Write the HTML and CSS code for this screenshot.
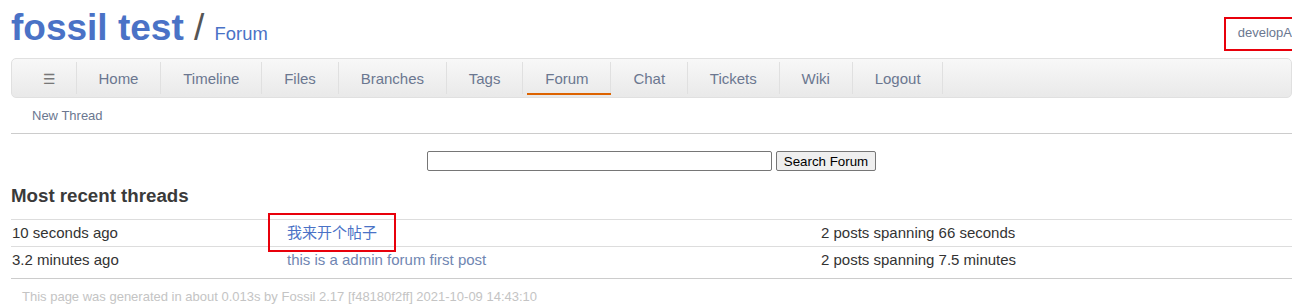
FILE: index.html
```html
<!DOCTYPE html>
<html lang="en">
<head>
    <meta charset="UTF-8">
    <title>fossil test: Forum</title>
    <link rel="stylesheet" href="styles.css">
</head>
<body>

    <div class="header">
        <h1 class="title">
            <span class="project">fossil test</span> <span class="slash">/</span> <span class="page-name">Forum</span>
        </h1>
        <div class="login"><a href="#">developA</a></div>
    </div>

    <!-- main menu -->
    <div class="mainmenu">
        <a href="#" class="menu-toggle">&#9776;</a>
        <a href="#">Home</a>
        <a href="#">Timeline</a>
        <a href="#">Files</a>
        <a href="#">Branches</a>
        <a href="#">Tags</a>
        <a href="#" class="active">Forum</a>
        <a href="#">Chat</a>
        <a href="#">Tickets</a>
        <a href="#">Wiki</a>
        <a href="#">Logout</a>
    </div>

    <div class="submenu">
        <a href="#">New Thread</a>
    </div>

    <div class="content">
        <form class="search" action="#" method="GET">
            <input type="text" name="s" class="search-box">
            <button type="submit">Search Forum</button>
        </form>

        <h2>Most recent threads</h2>

        <div class="threads">
            <div class="row">
                <div class="cell age">10 seconds ago</div>
                <div class="cell"><a href="#" class="thread-link marked">我来开个帖子</a></div>
                <div class="cell">2 posts spanning 66 seconds</div>
            </div>
            <div class="row">
                <div class="cell age">3.2 minutes ago</div>
                <div class="cell"><a href="#" class="thread-link visited">this is a admin forum first post</a></div>
                <div class="cell">2 posts spanning 7.5 minutes</div>
            </div>
        </div>
    </div>

    <div class="footer">
        This page was generated in about 0.013s by Fossil 2.17 [f48180f2ff] 2021-10-09 14:43:10
    </div>

</body>
</html>
```

FILE: styles.css
```css
body {
    font-family: "Liberation Sans", Arial, "Noto Sans CJK SC", sans-serif;
    color: #333;
    background-color: white;
    margin: 0 20px 0 11px;
    padding: 0;
}
a {
    text-decoration: none;
}
.header {
    display: flex;
    justify-content: space-between;
    align-items: flex-start;
    padding-top: 6px;
}
.title {
    margin: 0;
    font-size: 37px;
    line-height: 43px;
    font-weight: normal;
}
.title span {
    line-height: 1;
}
.title .project {
    color: #4a72c6;
    font-weight: bold;
}
.title .slash {
    color: #555;
}
.title .page-name {
    color: #4a72c6;
    font-size: 18.4px;
}
.login {
    position: relative;
    margin-top: 19px;
    font-size: 13px;
    line-height: 15px;
}
.login a {
    color: #6b7790;
}
/* red marker box drawn over the screenshot */
.login::after {
    content: "";
    position: absolute;
    left: -14px;
    right: -16px;
    top: -8px;
    bottom: -11px;
    border: 2px solid #e8000b;
}
.mainmenu {
    display: flex;
    margin-top: 9px;
    height: 38px;
    border: 1px solid #e0e0e0;
    border-radius: 5px;
    background: linear-gradient(to bottom, #f8f8f8, #e9e9e9);
}
.mainmenu a {
    position: relative;
    margin: 3px 0;
    padding: 0 21.9px;
    line-height: 34px;
    font-size: 15px;
    color: #6b7790;
    border-right: 1px solid #e0e0e0;
}
.mainmenu a.menu-toggle {
    padding: 0 20px 0 31px;
    color: #777;
    font-family: "DejaVu Sans", sans-serif;
    font-size: 14px;
}
.mainmenu a.active::after {
    content: "";
    position: absolute;
    left: 4px;
    right: -1px;
    bottom: -1px;
    height: 2px;
    background-color: #dd6300;
}
.submenu {
    padding: 10px 21px;
    font-size: 13px;
    line-height: 15px;
    border-bottom: 1px solid #ccc;
}
.submenu a {
    color: #6b7790;
}
.search {
    display: flex;
    justify-content: center;
    gap: 4px;
    margin-top: 17px;
}
.search input {
    box-sizing: border-box;
    width: 345px;
    height: 20px;
    margin: 0;
    border: 1px solid #767676;
    border-radius: 2px;
}
.search button {
    box-sizing: border-box;
    width: 100px;
    height: 20px;
    margin: 0;
    padding: 0;
    font-family: "Liberation Sans", Arial, sans-serif;
    font-size: 13.33px;
    color: #000;
    background-color: #efefef;
    border: 1px solid #767676;
    border-radius: 2px;
}
h2 {
    margin: 14px 0 12px;
    font-size: 18.7px;
    line-height: 22px;
    color: #3a3a3a;
}
.row {
    display: grid;
    grid-template-columns: 276px 534px 1fr;
    border-top: 1px solid #ddd;
}
.cell {
    padding: 4px 0 5px;
    font-size: 15px;
    line-height: 17px;
}
.cell.age {
    padding-left: 1px;
}
.thread-link {
    position: relative;
    color: #4a72c6;
}
.thread-link.visited {
    color: #7086b2;
}
/* red marker box drawn over the screenshot */
.thread-link.marked::after {
    content: "";
    position: absolute;
    left: -19px;
    right: -19px;
    top: -11px;
    bottom: -11px;
    border: 2px solid #e8000b;
}
.footer {
    margin-top: 5px;
    padding: 10px 11px;
    border-top: 1px solid #ccc;
    font-size: 13px;
    line-height: 15px;
    color: #c4c4c4;
}
```
